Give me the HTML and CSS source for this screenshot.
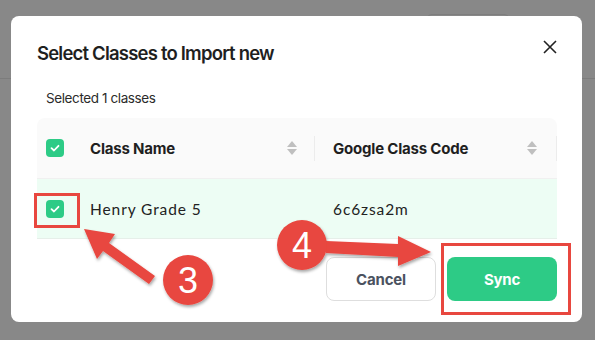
FILE: index.html
```html
<!DOCTYPE html>
<html>
<head>
<meta charset="utf-8">
<link rel="stylesheet" href="styles.css">
</head>
<body>
<div class="backdrop">
  <div class="bg-line"></div>
  <div class="bg-btn"></div>
</div>
<div class="modal">
  <div class="modal-head">
    <h1 class="title">Select Classes to Import new</h1>
    <svg class="close" width="14" height="14" viewBox="0 0 14 14"><path d="M1 1L13 13M13 1L1 13" stroke="#222" stroke-width="1.6" fill="none"/></svg>
  </div>
  <div class="selected">Selected 1 classes</div>
  <div class="table">
    <div class="row head">
      <div class="cell cb"><span class="check"><svg width="12" height="12" viewBox="0 0 12 12"><path d="M2.5 6.2L5 8.5L9.5 3.8" stroke="#fff" stroke-width="1.8" fill="none" stroke-linecap="round" stroke-linejoin="round"/></svg></span></div>
      <div class="cell name"><span>Class Name</span><span class="sort"><i class="up"></i><i class="down"></i></span></div>
      <div class="divider"></div>
      <div class="cell code"><span>Google Class Code</span><span class="sort"><i class="up"></i><i class="down"></i></span></div>
      <div class="divider end"></div>
    </div>
    <div class="row body">
      <div class="cell cb"><span class="check"><svg width="12" height="12" viewBox="0 0 12 12"><path d="M2.5 6.2L5 8.5L9.5 3.8" stroke="#fff" stroke-width="1.8" fill="none" stroke-linecap="round" stroke-linejoin="round"/></svg></span></div>
      <div class="cell name data">Henry Grade 5</div>
      <div class="gap"></div>
      <div class="cell code data">6c6zsa2m</div>
    </div>
  </div>
  <div class="footer">
    <button class="btn cancel">Cancel</button>
    <button class="btn sync">Sync</button>
  </div>
</div>
<svg class="annot" width="595" height="340" viewBox="0 0 595 340">
  <defs>
    <filter id="sh" x="-20%" y="-20%" width="140%" height="140%">
      <feDropShadow dx="1" dy="2" stdDeviation="1.5" flood-color="#000" flood-opacity="0.35"/>
    </filter>
  </defs>
  <rect x="35.5" y="194.5" width="43" height="32" fill="none" stroke="#e8473f" stroke-width="3"/>
  <rect x="442.5" y="244.5" width="127" height="69" fill="none" stroke="#e8473f" stroke-width="3"/>
  <g filter="url(#sh)" fill="#e8473f">
    <path d="M84 229 L115 234 L109 243 L155 276 L149 284 L103 251 L97 259 Z"/>
    <path d="M326 241 L398 244 L398 236 L431 252 L398 266 L398 257 L326 253 Z"/>
    <circle cx="188" cy="280" r="25"/>
    <circle cx="302" cy="245" r="25"/>
  </g>
  <text x="188" y="293" text-anchor="middle" class="num">3</text>
  <text x="302" y="258" text-anchor="middle" class="num">4</text>
</svg>
</body>
</html>
```
FILE: styles.css
```css
* { box-sizing: border-box; }
html, body { margin: 0; padding: 0; }
body {
  width: 595px;
  height: 340px;
  background: #888888;
  position: relative;
  overflow: hidden;
  font-family: "Inter", "Noto Sans", sans-serif;
}
.backdrop { position: absolute; inset: 0; }
.bg-line { position: absolute; left: 0; right: 0; top: 78px; height: 1px; background: #7c7c7c; }
.bg-btn { position: absolute; left: 426px; top: 14px; width: 84px; height: 30px; border: 1px solid #7d7d7d; border-radius: 6px; }
.modal {
  position: absolute;
  left: 11px;
  top: 16px;
  width: 571px;
  height: 306px;
  background: #fff;
  border-radius: 8px;
  padding: 22px 25px 0 26px;
  display: flex;
  flex-direction: column;
}
.modal-head {
  display: flex;
  justify-content: space-between;
  align-items: flex-start;
  height: 38px;
}
.title {
  margin: 0;
  font-size: 18.5px;
  font-weight: 600;
  color: #1f1f1f;
  letter-spacing: -0.8px;
  line-height: 30px;
}
.close { margin-top: 2px; margin-right: 0; }
.selected {
  padding-left: 9px;
  font-size: 13.5px;
  color: #2b2b2b;
  letter-spacing: -0.4px;
  height: 42px;
  line-height: 44px;
}
.table { width: 520px; border-radius: 8px 8px 0 0; overflow: hidden; }
.row { display: flex; align-items: center; }
.row.head { height: 61px; background: #fafafa; border-bottom: 1px solid #f0f0f0; }
.row.body { height: 60px; background: #edfdf4; border-bottom: 1px solid #e6efe9; }
.cell.cb { width: 53px; padding-left: 9px; display: flex; }
.check {
  width: 18px; height: 18px; border-radius: 4px;
  background: #2dcb86;
  display: flex; align-items: center; justify-content: center;
}
.cell.name { width: 224px; display: flex; justify-content: space-between; align-items: center; padding-right: 17px; }
.cell.code { width: 240px; display: flex; justify-content: space-between; align-items: center; padding-left: 18px; padding-right: 18px; }
.head .cell span:first-child { font-size: 15px; font-weight: 700; color: #1f1f1f; letter-spacing: -0.2px; }
.divider { width: 1px; height: 25px; background: #ececec; }
.divider.end { margin-left: auto; }
.gap { width: 1px; }
.data { font-family: "Lato", sans-serif; font-size: 15.5px; color: #222; letter-spacing: 0.9px; }
.sort { display: flex; flex-direction: column; gap: 2px; }
.sort i { display: block; width: 0; height: 0; border-left: 5px solid transparent; border-right: 5px solid transparent; }
.sort .up { border-bottom: 6px solid #bfbfbf; }
.sort .down { border-top: 6px solid #bfbfbf; }
.footer {
  display: flex;
  justify-content: flex-end;
  gap: 11px;
  margin-top: 18px;
  padding-right: 0;
}
.btn {
  height: 44px;
  border-radius: 8px;
  font-family: "Inter", sans-serif;
  font-size: 15px;
  font-weight: 700;
  letter-spacing: -0.2px;
  cursor: pointer;
}
.cancel { width: 110px; background: #fff; border: 1px solid #dedede; color: #4b5260; }
.sync { width: 110px; background: #2dcb86; border: none; color: #fff; margin-right: 0; }
.annot { position: absolute; left: 0; top: 0; }
.num { font-family: "Liberation Sans", Arial, sans-serif; font-size: 36px; fill: #fff; }
```
